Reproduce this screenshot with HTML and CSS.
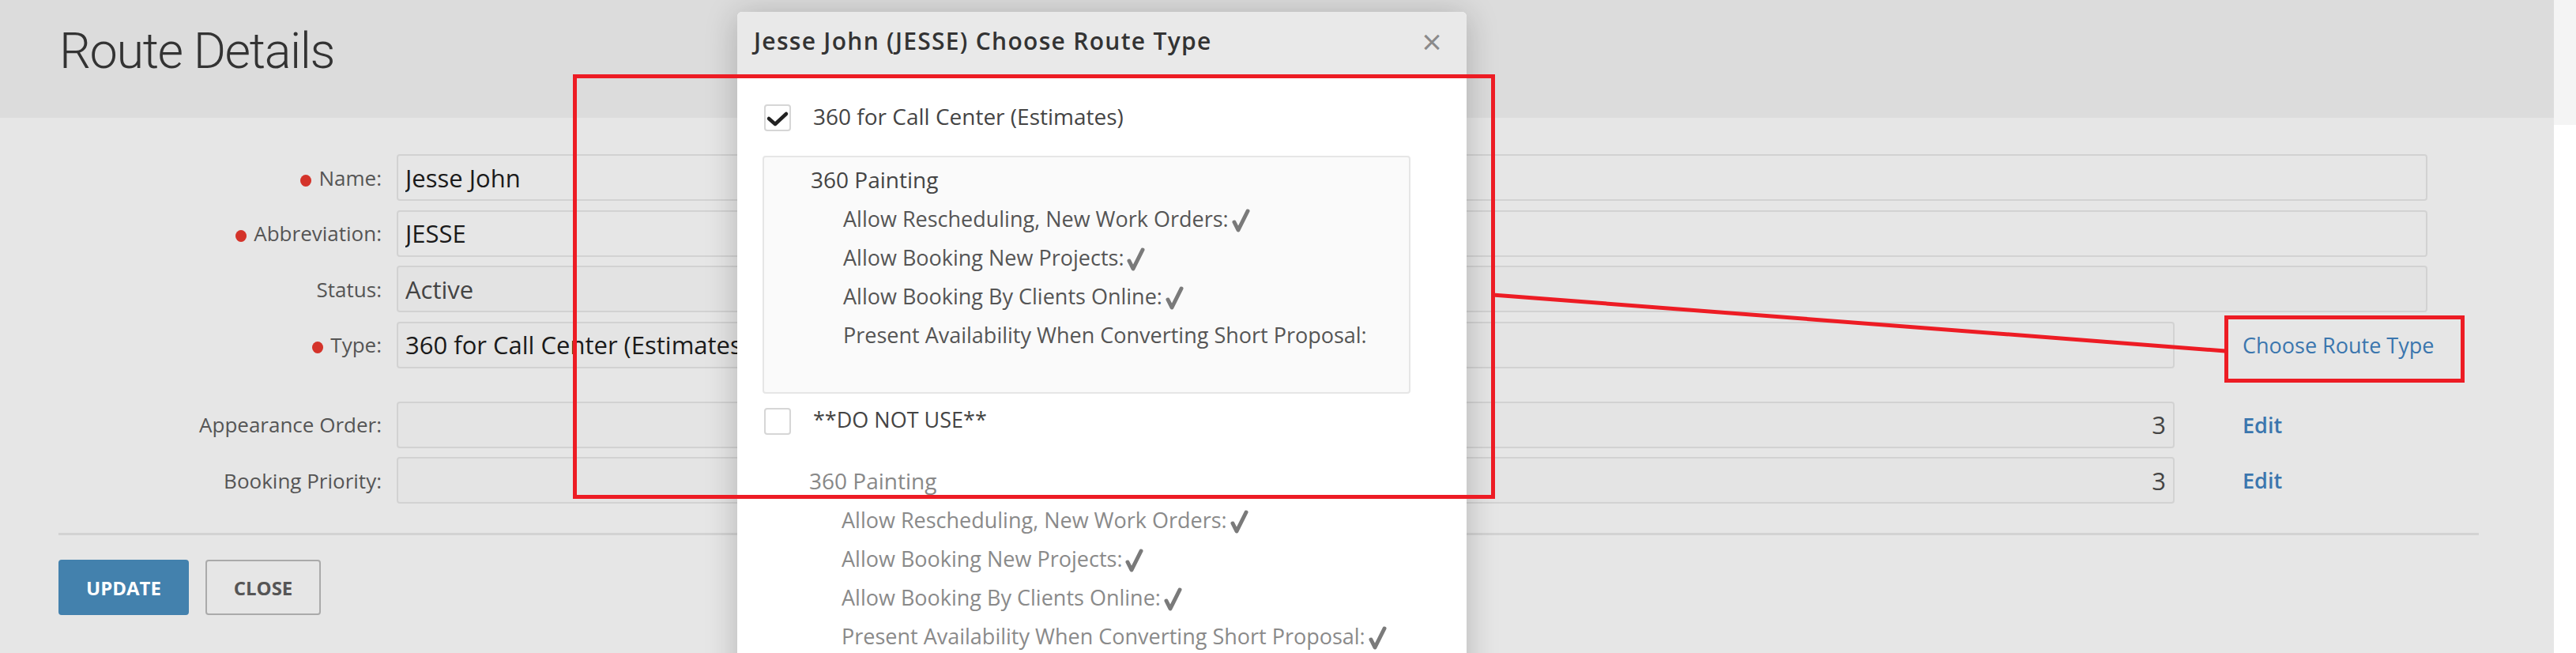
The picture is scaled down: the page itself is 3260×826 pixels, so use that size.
FILE: index.html
```html
<!DOCTYPE html>
<html lang="en">
<head>
  <meta charset="UTF-8">
  <title>Route Details</title>
  <link rel="stylesheet" href="styles.css">
</head>
<body>
  <div class="page">
    <header class="page-head">
      <h1>Route Details</h1>
    </header>

    <form class="route-form">
      <div class="row">
        <label class="req">Name:</label>
        <input class="field" type="text" value="Jesse John">
      </div>
      <div class="row">
        <label class="req">Abbreviation:</label>
        <input class="field" type="text" value="JESSE">
      </div>
      <div class="row">
        <label>Status:</label>
        <input class="field readonly" type="text" value="Active" readonly>
      </div>
      <div class="row">
        <label class="req">Type:</label>
        <input class="field short" type="text" value="360 for Call Center (Estimates)" readonly>
        <a class="link" href="#">Choose Route Type</a>
      </div>

      <div class="row spaced">
        <label>Appearance Order:</label>
        <input class="field short num" type="text" value="3" readonly>
        <a class="link strong" href="#">Edit</a>
      </div>
      <div class="row">
        <label>Booking Priority:</label>
        <input class="field short num" type="text" value="3" readonly>
        <a class="link strong" href="#">Edit</a>
      </div>

      <hr class="divider">

      <div class="actions">
        <button type="button" class="btn primary">UPDATE</button>
        <button type="button" class="btn">CLOSE</button>
      </div>
    </form>
  </div>
  <div class="gutter"></div>

  <div class="modal">
    <div class="modal-head">
      <span>Jesse John (JESSE) Choose Route Type</span>
      <span class="close">&times;</span>
    </div>
    <div class="modal-body">
      <div class="choice">
        <span class="box">
          <svg width="34" height="34" viewBox="0 0 34 34"><path d="M6 18 L14 25 L28 12" fill="none" stroke="#222" stroke-width="4.5" stroke-linecap="round" stroke-linejoin="round"/></svg>
        </span>
        <span class="choice-label">360 for Call Center (Estimates)</span>
      </div>
      <div class="group boxed">
        <div class="group-title">360 Painting</div>
        <div class="opt">Allow Rescheduling, New Work Orders:<svg class="tick" width="24" height="30" viewBox="0 0 24 30"><path d="M4 17 L9 27 L21 3" fill="none" stroke="#7a7a7a" stroke-width="5" stroke-linecap="round" stroke-linejoin="round"/></svg></div>
        <div class="opt">Allow Booking New Projects:<svg class="tick" width="24" height="30" viewBox="0 0 24 30"><path d="M4 17 L9 27 L21 3" fill="none" stroke="#7a7a7a" stroke-width="5" stroke-linecap="round" stroke-linejoin="round"/></svg></div>
        <div class="opt">Allow Booking By Clients Online:<svg class="tick" width="24" height="30" viewBox="0 0 24 30"><path d="M4 17 L9 27 L21 3" fill="none" stroke="#7a7a7a" stroke-width="5" stroke-linecap="round" stroke-linejoin="round"/></svg></div>
        <div class="opt">Present Availability When Converting Short Proposal:</div>
      </div>

      <div class="choice">
        <span class="box"></span>
        <span class="choice-label plain">**DO NOT USE**</span>
      </div>
      <div class="group muted">
        <div class="group-title">360 Painting</div>
        <div class="opt">Allow Rescheduling, New Work Orders:<svg class="tick" width="24" height="30" viewBox="0 0 24 30"><path d="M4 17 L9 27 L21 3" fill="none" stroke="#7a7a7a" stroke-width="5" stroke-linecap="round" stroke-linejoin="round"/></svg></div>
        <div class="opt">Allow Booking New Projects:<svg class="tick" width="24" height="30" viewBox="0 0 24 30"><path d="M4 17 L9 27 L21 3" fill="none" stroke="#7a7a7a" stroke-width="5" stroke-linecap="round" stroke-linejoin="round"/></svg></div>
        <div class="opt">Allow Booking By Clients Online:<svg class="tick" width="24" height="30" viewBox="0 0 24 30"><path d="M4 17 L9 27 L21 3" fill="none" stroke="#7a7a7a" stroke-width="5" stroke-linecap="round" stroke-linejoin="round"/></svg></div>
        <div class="opt">Present Availability When Converting Short Proposal:<svg class="tick" width="24" height="30" viewBox="0 0 24 30"><path d="M4 17 L9 27 L21 3" fill="none" stroke="#7a7a7a" stroke-width="5" stroke-linecap="round" stroke-linejoin="round"/></svg></div>
      </div>
    </div>
  </div>

  <!-- red review marks drawn over the screenshot -->
  <svg class="marks" width="3260" height="826" viewBox="0 0 3260 826">
    <rect x="727.5" y="96.5" width="1162" height="532" fill="none" stroke="#ed1c24" stroke-width="5"/>
    <line x1="1889" y1="373" x2="2816" y2="444" stroke="#ed1c24" stroke-width="5"/>
    <rect x="2817.5" y="401.5" width="299" height="80" fill="none" stroke="#ed1c24" stroke-width="5"/>
  </svg>
</body>
</html>
```

FILE: styles.css
```css
body {
  margin: 0;
  width: 3260px;
  height: 826px;
  overflow: hidden;
  display: flex;
  background: #fff;
  font-family: "Open Sans", "Liberation Sans", sans-serif;
  color: #555;
  position: relative;
}
.page {
  width: 3232px;
  flex: none;
  background: #e6e6e6;
}
.gutter {
  flex: 1;
  background: linear-gradient(to bottom, #f4f4f4 158px, #fff 158px);
}
.page-head {
  height: 149px;
  background: #dcdcdc;
}
.page-head h1 {
  margin: 0;
  padding: 28px 0 0 75px;
  font-family: Roboto, "Liberation Sans", sans-serif;
  font-weight: 300;
  font-size: 63px;
  line-height: 74px;
  letter-spacing: -1.4px;
  color: #333;
}
.route-form {
  padding: 46px 95px 0 74px;
}
.row {
  display: flex;
  align-items: center;
  height: 59px;
  margin-bottom: 11.5px;
}
.row.spaced {
  margin-top: 42px;
}
.row label {
  width: 409px;
  margin-right: 19px;
  flex: none;
  text-align: right;
  font-size: 26px;
  color: #555;
}
.row label.req::before {
  content: "";
  display: inline-block;
  width: 14px;
  height: 15px;
  border-radius: 50%;
  background: #d4332a;
  margin-right: 9px;
  vertical-align: -1px;
}
.field {
  box-sizing: border-box;
  width: 2570px;
  height: 59px;
  padding: 0 9px;
  border: 2px solid #d2d2d2;
  border-radius: 4px;
  background: #e6e6e6;
  font-family: "Open Sans", "Liberation Sans", sans-serif;
  font-size: 31px;
  color: #1a1a1a;
  outline: none;
}
.field.readonly {
  background: #e3e3e3;
  color: #444;
}
.field.short {
  width: 2250px;
  background: #e4e4e4;
}
.field.num {
  text-align: right;
  color: #444;
}
.link {
  margin-left: 86px;
  font-size: 27px;
  color: #3b76ae;
  text-decoration: none;
}
.link.strong {
  font-weight: 600;
}
.divider {
  border: none;
  border-top: 3px solid #d3d3d3;
  margin: 37px 0 31px;
}
.actions {
  display: flex;
  gap: 21px;
}
.btn {
  box-sizing: border-box;
  height: 70px;
  width: 146px;
  border: 2px solid #aaa;
  border-radius: 4px;
  background: transparent;
  font-family: "Open Sans", "Liberation Sans", sans-serif;
  font-weight: bold;
  font-size: 24px;
  color: #555;
}
.btn.primary {
  width: 165px;
  border-color: #4381ad;
  background: #4381ad;
  color: #fff;
}

/* modal */
.modal {
  position: absolute;
  left: 933px;
  top: 15px;
  width: 923px;
  height: 900px;
  background: #fff;
  border-radius: 6px 6px 0 0;
  box-shadow: 0 4px 40px rgba(0, 0, 0, 0.22);
}
.modal-head {
  height: 80px;
  box-sizing: border-box;
  display: flex;
  justify-content: space-between;
  padding: 0 30px 0 21px;
  line-height: 74px;
  background: #e9e9e9;
  border-radius: 6px 6px 0 0;
  font-size: 30px;
  font-weight: 600;
  letter-spacing: 1.3px;
  color: #333;
}
.modal-head .close {
  font-weight: normal;
  font-size: 44px;
  color: #8a8a8a;
}
.modal-body {
  padding: 37px 71px 0 34px;
}
.choice {
  display: flex;
  align-items: flex-start;
  gap: 28px;
}
.box {
  box-sizing: border-box;
  width: 34px;
  height: 34px;
  border: 2px solid #d6d6d6;
  border-radius: 4px;
  background: #fff;
}
.box svg {
  display: block;
  margin: -2px;
}
.choice-label {
  font-size: 28px;
  font-weight: 500;
  line-height: 30px;
  color: #444;
}
.choice-label.plain {
  font-weight: normal;
  font-size: 27px;
}
.group {
  margin-left: -2px;
  padding: 4px 0 0 59px;
}
.group.boxed {
  margin-top: 31px;
  margin-bottom: 18px;
  height: 301px;
  box-sizing: border-box;
  background: #fafafa;
  border: 2px solid #e6e6e6;
  border-radius: 4px;
}
.group.muted {
  margin-top: 34px;
  padding-top: 0;
  color: #8a8a8a;
}
.group-title {
  font-size: 28px;
  font-weight: 500;
  line-height: 49px;
  color: #444;
}
.group.muted .group-title {
  font-weight: normal;
  color: #888;
}
.opt {
  padding-left: 41px;
  font-size: 27px;
  line-height: 49px;
}
.tick {
  margin-left: 3px;
  vertical-align: -7px;
}
.marks {
  position: absolute;
  left: 0;
  top: 0;
  pointer-events: none;
}
```
